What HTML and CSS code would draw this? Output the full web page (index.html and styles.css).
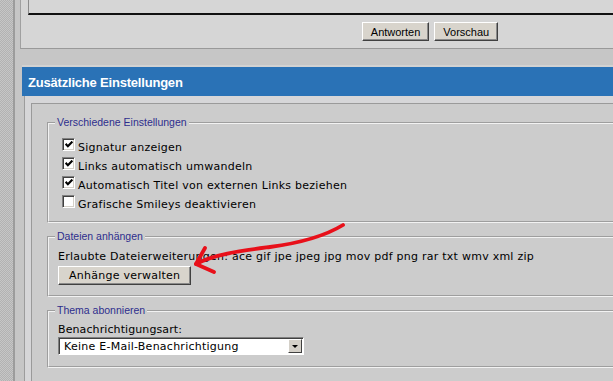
FILE: index.html
```html
<!DOCTYPE html>
<html lang="de">
<head>
  <meta charset="utf-8">
  <title>Zusätzliche Einstellungen</title>
  <link rel="stylesheet" href="styles.css">
</head>
<body>
  <div class="page">
    <div class="sidebar"></div>
    <div class="main">
      <div class="reply-panel">
        <div class="message-box"></div>
        <div class="reply-buttons">
          <button class="btn btn-small">Antworten</button>
          <button class="btn btn-small">Vorschau</button>
        </div>
      </div>

      <div class="settings">
        <h2 class="settings-title">Zusätzliche Einstellungen</h2>
        <div class="settings-body">
          <div class="settings-inner">
            <fieldset>
              <legend>Verschiedene Einstellungen</legend>
              <label class="check-row"><span class="check"><svg viewBox="0 0 7 7"><path d="M0.5 2.5 L2.5 4.5 L6.5 0.5" /></svg></span><span>Signatur anzeigen</span></label>
              <label class="check-row"><span class="check"><svg viewBox="0 0 7 7"><path d="M0.5 2.5 L2.5 4.5 L6.5 0.5" /></svg></span><span>Links automatisch umwandeln</span></label>
              <label class="check-row"><span class="check"><svg viewBox="0 0 7 7"><path d="M0.5 2.5 L2.5 4.5 L6.5 0.5" /></svg></span><span>Automatisch Titel von externen Links beziehen</span></label>
              <label class="check-row"><span class="check"></span><span>Grafische Smileys deaktivieren</span></label>
            </fieldset>

            <fieldset>
              <legend>Dateien anhängen</legend>
              <div class="file-types">Erlaubte Dateierweiterungen: ace gif jpe jpeg jpg mov pdf png rar txt wmv xml zip</div>
              <button class="btn btn-attach">Anhänge verwalten</button>
            </fieldset>

            <fieldset>
              <legend>Thema abonnieren</legend>
              <div class="field-label">Benachrichtigungsart:</div>
              <div class="select">
                <span>Keine E-Mail-Benachrichtigung</span>
                <span class="select-arrow"></span>
              </div>
            </fieldset>
          </div>
        </div>
      </div>
    </div>
  </div>

  <!-- red hand-drawn arrow over the page -->
  <svg class="annotation" width="613" height="381" viewBox="0 0 613 381">
    <path d="M343 225 C 325 236, 300 243, 270 247 C 240 251, 215 254, 196 264" />
    <path d="M205 248 L196 264 L214 272" />
  </svg>
</body>
</html>
```

FILE: styles.css
```css
html, body {
  margin: 0;
  padding: 0;
  overflow: hidden;
}

body {
  font-family: "DejaVu Sans", Verdana, sans-serif;
  font-size: 11px;
  letter-spacing: 0.25px;
  color: #000;
  background-color: #c6c6c6;
  position: relative;
}

.page {
  display: flex;
  width: 832px;
  height: 381px;
}

.sidebar {
  flex: none;
  width: 13px;
  border-right: 2px solid #9c9c9c;
  background-color: #bcbcbc;
  background-image: repeating-conic-gradient(#b2b2b2 0 25%, #c6c6c6 0 50%);
  background-size: 2px 2px;
}

.main {
  flex: 1;
  padding-left: 5px;
}

/* reply box at the top */
.reply-panel {
  background-color: #d6d6d6;
  border-left: 1px solid #a0a0a0;
  border-bottom: 1px solid #999;
  padding: 0 0 7px 7px;
}

.message-box {
  height: 13px;
  border-left: 1px solid #8c8c8c;
  border-bottom: 2px solid #111;
}

.reply-buttons {
  display: flex;
  justify-content: center;
  gap: 5px;
  margin-top: 7px;
}

.btn {
  font-family: inherit;
  font-size: 11px;
  letter-spacing: inherit;
  height: 19px;
  padding: 0 8px;
  color: #000;
  background-color: #d8d4cc;
  border: 1px solid;
  border-color: #fff #404040 #404040 #fff;
  box-shadow: inset -1px -1px #8a8a8a;
}

.btn-small {
  font-family: "Liberation Sans", Arial, sans-serif;
  letter-spacing: 0;
  padding: 0 8px;
}

/* additional settings */
.settings {
  margin: 16px 0 0 2px;
  border-top: 2px solid #d2d2d2;
}

.settings-title {
  margin: 0;
  height: 29px;
  line-height: 31px;
  padding-left: 6px;
  background-color: #2a72b6;
  color: #fff;
  font-family: "Liberation Sans", Arial, sans-serif;
  font-size: 13px;
  font-weight: bold;
  letter-spacing: -0.2px;
}

.settings-body {
  margin-left: 2px;
  border-left: 1px solid #9c9c9c;
  background-color: #d6d6d8;
  padding: 7px 0 0 6px;
}

.settings-inner {
  background-color: #cccccc;
  border-top: 1px solid #9a9a9a;
  border-left: 1px solid #9a9a9a;
  padding: 12px 0 20px 15px;
}

fieldset {
  margin: 0 0 7px 0;
  padding: 6px 9px 10px 9px;
  border: 2px groove #f2f2f2;
  min-width: 0;
}

legend {
  margin-left: -3px;
  padding: 0 2px;
  height: 13px;
  line-height: 13px;
  font-family: "Liberation Sans", Arial, sans-serif;
  font-size: 10.5px;
  letter-spacing: 0;
  color: #2e2e8c;
}

.check-row {
  display: flex;
  align-items: flex-start;
  height: 19px;
  padding-left: 4px;
}

.check-row span:last-child {
  padding-top: 6px;
  line-height: 13px;
}

.check {
  flex: none;
  box-sizing: border-box;
  width: 13px;
  height: 13px;
  margin: 3px 3px 0 0;
  background-color: #fff;
  border: 1px solid;
  border-color: #808080 #fff #fff #808080;
  box-shadow: inset 1px 1px #404040, inset -1px -1px #d4d0c8;
  display: flex;
  align-items: center;
  justify-content: center;
}

.check svg {
  width: 8px;
  height: 8px;
  fill: none;
  stroke: #000;
  stroke-width: 1.9;
}

.file-types {
  line-height: 15px;
}

.btn-attach {
  margin-top: 2px;
  padding: 0 10px;
}

fieldset:last-child {
  padding-bottom: 11px;
}

.field-label {
  line-height: 14px;
  font-size: 11px;
  letter-spacing: 0.1px;
}

.select {
  box-sizing: border-box;
  width: 246px;
  height: 18px;
  display: flex;
  align-items: center;
  padding-left: 5px;
  background-color: #fff;
  border: 1px solid;
  border-color: #808080 #fff #fff #808080;
  box-shadow: inset 1px 1px #404040;
}

.select-arrow {
  box-sizing: border-box;
  margin: 0 1px 0 auto;
  width: 14px;
  height: 14px;
  background-color: #d4d0c8;
  border: 1px solid;
  border-color: #fff #404040 #404040 #fff;
  display: flex;
  align-items: center;
  justify-content: center;
}

.select-arrow::after {
  content: "";
  border-left: 3px solid transparent;
  border-right: 3px solid transparent;
  border-top: 3px solid #000;
}

.annotation {
  position: absolute;
  left: 0;
  top: 0;
  pointer-events: none;
  fill: none;
  stroke: #e8101a;
  stroke-width: 3.8;
  stroke-linecap: round;
  stroke-linejoin: round;
}
```
